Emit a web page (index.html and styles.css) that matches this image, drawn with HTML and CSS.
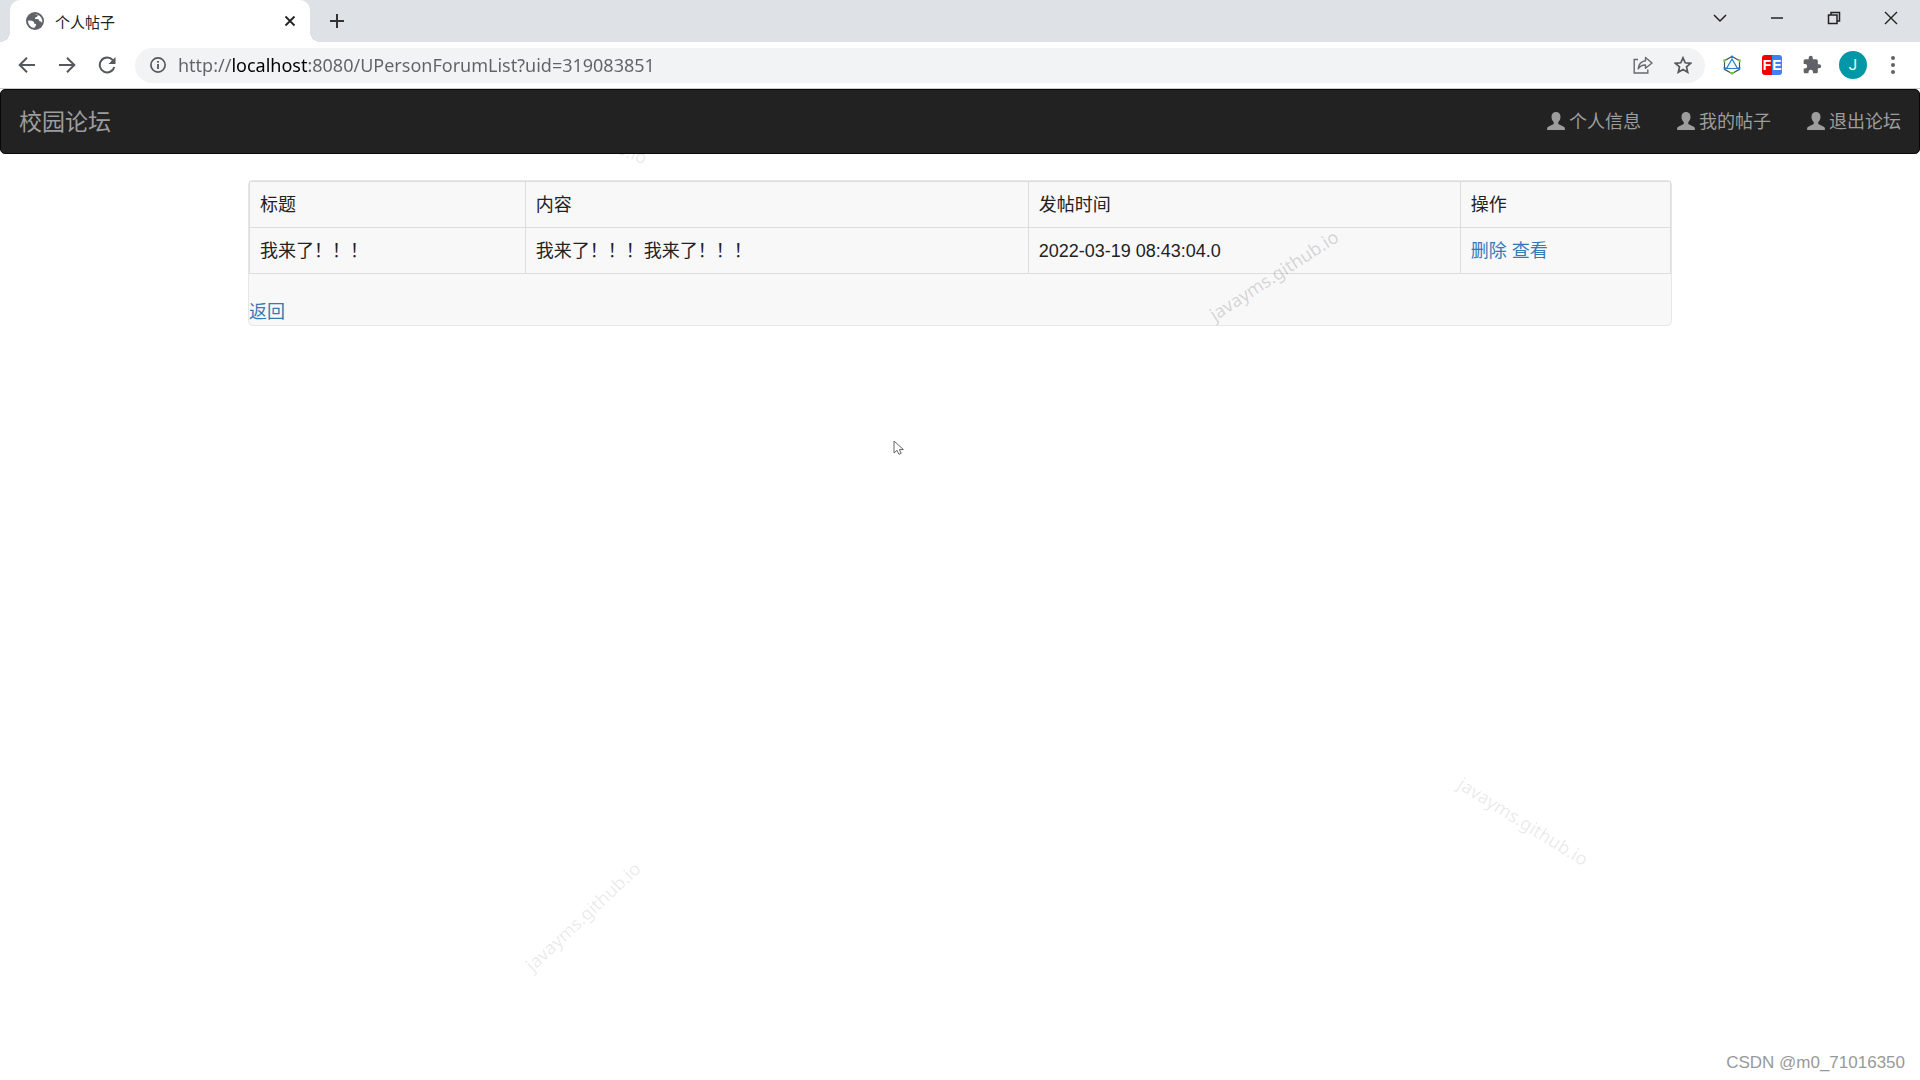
FILE: index.html
```html
<!DOCTYPE html>
<html lang="zh-CN">
<head>
    <meta charset="UTF-8">
    <meta name="viewport" content="width=device-width, initial-scale=1.0">
    <title>个人帖子</title>
    <link rel="stylesheet" href="styles.css">
</head>
<body>
    <!-- 浏览器标签栏 -->
    <div class="tab-strip">
        <div class="tab">
            <svg class="globe" width="18" height="18" viewBox="0 0 18 18">
                <circle cx="9" cy="9" r="9" fill="#5f6368"/>
                <path d="M2 8.5l4 .3 2 1.2.3 1.7 1.900.4-.4 1.700-1.600 2.300A7.200 7.200 0 0 1 2 8.500zM8.200 2.300l3-.1.6 1.400-1 1.500-1.600.5-.3 1.300 1.800.2 2 .4.8 1.800 2.100.4.4 1.500a7 7 0 0 0-4.500-8.500z" fill="#fff"/>
            </svg>
            <span class="tab-title">个人帖子</span>
            <button class="icon-btn tab-close" aria-label="关闭">
                <svg width="12" height="12" viewBox="0 0 12 12"><path d="M1.500 1.500l9 9M10.500 1.500l-9 9" stroke="#222" stroke-width="1.800"/></svg>
            </button>
        </div>
        <button class="icon-btn new-tab" aria-label="新标签页">
            <svg width="16" height="16" viewBox="0 0 16 16"><path d="M8 1v14M1 8h14" stroke="#333" stroke-width="2"/></svg>
        </button>
        <div class="window-buttons">
            <button class="icon-btn" aria-label="搜索标签页">
                <svg width="14" height="14" viewBox="0 0 14 14"><path d="M1 4l6 6 6-6" fill="none" stroke="#222" stroke-width="1.500"/></svg>
            </button>
            <button class="icon-btn" aria-label="最小化">
                <svg width="14" height="14" viewBox="0 0 14 14"><path d="M1 7h12" stroke="#222" stroke-width="1.500"/></svg>
            </button>
            <button class="icon-btn" aria-label="还原">
                <svg width="14" height="14" viewBox="0 0 14 14"><path d="M1.500 4h8.500v8.500H1.500zM4 4V1.500h8.500V10H10" fill="none" stroke="#222" stroke-width="1.500"/></svg>
            </button>
            <button class="icon-btn" aria-label="关闭窗口">
                <svg width="14" height="14" viewBox="0 0 14 14"><path d="M1 1l12 12M13 1L1 13" stroke="#222" stroke-width="1.400"/></svg>
            </button>
        </div>
    </div>

    <!-- 地址栏 -->
    <div class="toolbar">
        <div class="nav-buttons">
            <button class="icon-btn" aria-label="后退">
                <svg width="18" height="18" viewBox="0 0 18 18"><path d="M17 9H2M9 1.700L1.700 9 9 16.300" fill="none" stroke="#55585c" stroke-width="2"/></svg>
            </button>
            <button class="icon-btn" aria-label="前进">
                <svg width="18" height="18" viewBox="0 0 18 18"><path d="M1 9h15M9 1.700L16.300 9 9 16.300" fill="none" stroke="#55585c" stroke-width="2"/></svg>
            </button>
            <button class="icon-btn" aria-label="刷新">
                <svg width="18" height="18" viewBox="0 0 18 18"><path d="M14.800 4.200A7.400 7.400 0 1 0 16.300 11" fill="none" stroke="#55585c" stroke-width="2"/><path d="M17.500 1v7h-7z" fill="#55585c"/></svg>
            </button>
        </div>
        <div class="address-bar">
            <svg width="16" height="16" viewBox="0 0 16 16"><circle cx="8" cy="8" r="7.100" fill="none" stroke="#55585c" stroke-width="1.700"/><path d="M8 7v5M8 4v1.800" stroke="#55585c" stroke-width="1.800"/></svg>
            <input class="url" type="text" aria-label="地址" value="http://localhost:8080/UPersonForumList?uid=319083851">
            <button class="icon-btn" aria-label="分享">
                <svg width="20" height="18" viewBox="0 0 20 18"><path d="M5 3.500H1.200V17h13.600v-3.500" fill="none" stroke="#66696d" stroke-width="1.400"/><path d="M12.500 1.500L19 7l-6.500 5.200V9C9 9 7 10 5.200 12.800 5.600 8.500 8 5.300 12.500 4.700z" fill="none" stroke="#66696d" stroke-width="1.400" stroke-linejoin="round"/></svg>
            </button>
            <button class="icon-btn" aria-label="收藏">
                <svg width="18" height="18" viewBox="0 0 18 18"><path d="M9 1.800l2.200 5 5.400.5-4.100 3.600 1.200 5.300L9 13.400l-4.700 2.800 1.200-5.300L1.400 7.300l5.400-.5z" fill="none" stroke="#55585c" stroke-width="1.700"/></svg>
            </button>
        </div>
        <div class="extensions">
            <button class="icon-btn" aria-label="扩展程序一">
                <svg width="20" height="20" viewBox="0 0 20 20">
                    <path d="M10 1.500L17.500 5.700v8.600L10 18.500l-7.500-4.200V5.700z" fill="none" stroke="#46545e" stroke-width="1.200"/>
                    <path d="M10 4L4.500 13.500h11z" fill="#f2f7fc" stroke="#2b7fc3" stroke-width="1.200"/>
                    <path d="M10 0l2 3H8zM1 12.500h4l-2 3zM15 12.500h4l-2 3z" fill="#1684d8"/>
                    <path d="M1 4.500h4l-3 3.500zM19 4.500h-4l3 3.500zM7.500 17h5L10 20z" fill="#73c63a"/>
                </svg>
            </button>
            <button class="icon-btn fe-icon" aria-label="FE"><span class="fe-half fe-red">F</span><span class="fe-half fe-blue">E</span></button>
            <button class="icon-btn" aria-label="扩展程序">
                <svg width="20" height="20" viewBox="0 0 24 24"><path d="M20.500 11H19V7c0-1.100-.9-2-2-2h-4V3.500a2.500 2.500 0 0 0-5 0V5H4c-1.100 0-2 .9-2 2v3.800h1.500a2.700 2.700 0 0 1 0 5.400H2V20c0 1.100.9 2 2 2h3.800v-1.500a2.700 2.700 0 0 1 5.400 0V22H17c1.100 0 2-.9 2-2v-4h1.500a2.500 2.500 0 0 0 0-5z" fill="#5f6368"/></svg>
            </button>
            <button class="icon-btn avatar" aria-label="账户">J</button>
            <button class="icon-btn" aria-label="更多">
                <svg width="4" height="18" viewBox="0 0 4 18"><circle cx="2" cy="2" r="2"/><circle cx="2" cy="9" r="2"/><circle cx="2" cy="16" r="2"/></svg>
            </button>
        </div>
    </div>

    <!-- 导航栏 -->
    <nav class="navbar">
        <a class="navbar-brand" href="#">校园论坛</a>
        <ul class="navbar-nav">
            <li><a href="#"><svg class="user-icon" width="18" height="18" viewBox="0 0 18 18"><path d="M9 0c2.700 0 4.500 1.900 4.500 4.700 0 2.500-1 4.200-2.200 5.300v2l5.500 2.700c.7.400 1.100.9 1.100 1.700V18H.1v-1.600c0-.8.4-1.300 1.100-1.700L6.700 12v-2C5.500 8.900 4.500 7.200 4.500 4.700 4.500 1.900 6.300 0 9 0z"/></svg>个人信息</a></li>
            <li><a href="#"><svg class="user-icon" width="18" height="18" viewBox="0 0 18 18"><path d="M9 0c2.700 0 4.500 1.900 4.500 4.700 0 2.500-1 4.200-2.200 5.300v2l5.500 2.700c.7.400 1.100.9 1.100 1.700V18H.1v-1.600c0-.8.4-1.300 1.100-1.700L6.700 12v-2C5.500 8.900 4.500 7.200 4.500 4.700 4.500 1.900 6.300 0 9 0z"/></svg>我的帖子</a></li>
            <li><a href="#"><svg class="user-icon" width="18" height="18" viewBox="0 0 18 18"><path d="M9 0c2.700 0 4.500 1.900 4.500 4.700 0 2.500-1 4.200-2.200 5.300v2l5.500 2.700c.7.400 1.100.9 1.100 1.700V18H.1v-1.600c0-.8.4-1.300 1.100-1.700L6.700 12v-2C5.500 8.900 4.500 7.200 4.500 4.700 4.500 1.900 6.300 0 9 0z"/></svg>退出论坛</a></li>
        </ul>
    </nav>

    <main class="container">
        <div class="panel">
            <table class="table">
                <colgroup>
                    <col class="col-title">
                    <col class="col-content">
                    <col class="col-time">
                    <col class="col-action">
                </colgroup>
                <tr>
                    <td>标题</td>
                    <td>内容</td>
                    <td>发帖时间</td>
                    <td>操作</td>
                </tr>
                <tr>
                    <td>我来了！！！</td>
                    <td>我来了！！！我来了！！！</td>
                    <td>2022-03-19 08:43:04.0</td>
                    <td><a href="#">删除</a> <a href="#">查看</a></td>
                </tr>
            </table>
            <a href="#">返回</a>
        </div>
    </main>

    <!-- 水印 -->
    <div class="watermark mark-nav">javayms.github.io</div>
    <div class="watermark mark-table">javayms.github.io</div>
    <div class="watermark mark-left">javayms.github.io</div>
    <div class="watermark mark-right">javayms.github.io</div>
    <div class="csdn">CSDN @m0_71016350</div>
    <svg class="cursor" width="12" height="16" viewBox="0 0 12 16"><path d="M1 1v12l3-2.700 2 4 2.200-1-1.800-3.800h4z" fill="#fff" stroke="#666" stroke-width="1"/></svg>
</body>
</html>
```
FILE: styles.css
```css
* {
    box-sizing: border-box;
}
body {
    margin: 0;
    min-height: 100vh;
    position: relative;
    overflow: hidden;
    background-color: #fff;
    color: #222;
    font-family: "Liberation Sans", "Noto Sans CJK SC", sans-serif;
    font-size: 18px;
    line-height: 25px;
}
a {
    color: #337ab7;
    text-decoration: none;
}
a:hover {
    text-decoration: underline;
}
.icon-btn {
    display: flex;
    align-items: center;
    justify-content: center;
    flex: none;
    padding: 0;
    border: none;
    background: none;
    cursor: pointer;
}

/* 标签栏 */
.tab-strip {
    display: flex;
    align-items: center;
    height: 42px;
    padding-left: 10px;
    background-color: #dee1e6;
}
.tab {
    position: relative;
    display: flex;
    align-items: center;
    width: 300px;
    height: 42px;
    padding: 0 14px 0 16px;
    background-color: #fff;
    border-radius: 10px 10px 0 0;
}
.tab::before,
.tab::after {
    content: '';
    position: absolute;
    bottom: 0;
    width: 10px;
    height: 10px;
}
.tab::before {
    left: -10px;
    background: radial-gradient(circle at 0 0, transparent 10px, #fff 10px);
}
.tab::after {
    right: -10px;
    background: radial-gradient(circle at 100% 0, transparent 10px, #fff 10px);
}
.tab-title {
    flex: 1;
    margin-left: 11px;
    font-family: "Noto Sans CJK SC", sans-serif;
    font-size: 15px;
}
.new-tab {
    margin-left: 19px;
}
.window-buttons {
    display: flex;
    align-self: flex-start;
    margin-left: auto;
    padding-right: 1px;
}
.window-buttons .icon-btn {
    width: 57px;
    height: 36px;
}

/* 工具栏 */
.toolbar {
    display: flex;
    align-items: center;
    height: 47px;
    padding: 0 25px 0 18px;
    border-bottom: 1px solid #c8cacd;
}
.nav-buttons {
    display: flex;
    gap: 22px;
}
.address-bar {
    display: flex;
    align-items: center;
    flex: 1;
    gap: 21px;
    height: 35px;
    margin-left: 19px;
    padding: 0 13px 0 15px;
    background-color: #f1f3f4;
    border-radius: 18px;
}
.url {
    flex: 1;
    min-width: 0;
    margin-left: -9px;
    padding: 0;
    border: none;
    outline: none;
    font-family: "Noto Sans", sans-serif;
    font-size: 18px;
    line-height: 25px;
    /* 主机名用黑色，其余为灰色 */
    color: transparent;
    caret-color: #000;
    background: linear-gradient(to right, #5f6368 53px, #000 53px, #000 131px, #5f6368 131px);
    -webkit-background-clip: text;
    background-clip: text;
}
.extensions {
    display: flex;
    align-items: center;
    gap: 20px;
    margin-left: 17px;
}
.extensions svg {
    fill: #5f6368;
}
.fe-icon {
    border-radius: 3px;
    overflow: hidden;
}
.fe-half {
    width: 10px;
    height: 20px;
    color: #fff;
    font-family: "Liberation Sans", sans-serif;
    font-size: 14px;
    font-weight: bold;
    line-height: 20px;
}
.fe-red {
    background-color: #f20000;
}
.fe-blue {
    background-color: #3a83f1;
}
.avatar {
    width: 28px;
    height: 28px;
    margin: 0 4px 0 -3px;
    border-radius: 50%;
    background-color: #0097a7;
    color: #fff;
    font-family: Roboto, sans-serif;
    font-size: 15px;
}

/* 导航栏 */
.navbar {
    display: flex;
    align-items: center;
    justify-content: space-between;
    min-height: 65px;
    margin-bottom: 26px;
    border: 1px solid #080808;
    border-radius: 5px;
    background-color: #222;
}
.navbar a {
    display: flex;
    align-items: center;
    gap: 4px;
    padding: 20px 18px 18px;
    color: #9d9d9d;
}
.navbar .navbar-brand {
    font-size: 23px;
}
.navbar-nav {
    display: flex;
    margin: 0;
    padding: 0;
    list-style: none;
}
.user-icon {
    flex: none;
    margin-bottom: 3px;
    fill: #9d9d9d;
}

/* 帖子列表 */
.container {
    width: 100%;
    max-width: 1462px;
    margin: 0 auto;
    padding: 0 19px;
}
.panel {
    border: 1px solid #e7e7e7;
    border-radius: 5px;
    background-color: #f8f8f8;
}
.table {
    width: 100%;
    margin-bottom: 26px;
    border-collapse: collapse;
}
.table td {
    padding: 11px 10px 9px;
    border: 1px solid #ddd;
}
.col-title {
    width: 19.4%;
}
.col-content {
    width: 35.4%;
}
.col-time {
    width: 30.4%;
}
.col-action {
    width: 14.8%;
}

/* 浮层 */
.watermark {
    position: absolute;
    width: 160px;
    color: rgba(34, 34, 34, 0.1);
    font-family: "Noto Sans", sans-serif;
    text-align: center;
    pointer-events: none;
}
.mark-nav {
    left: 497px;
    top: 118px;
    transform: rotate(22deg);
}
.mark-table {
    left: 1194px;
    top: 263px;
    color: rgba(34, 34, 34, 0.18);
    transform: rotate(-33deg);
}
.mark-left {
    left: 503px;
    top: 904px;
    transform: rotate(-43deg);
}
.mark-right {
    left: 1443px;
    top: 809px;
    transform: rotate(32deg);
}
.csdn {
    position: absolute;
    right: 15px;
    bottom: 5px;
    color: #999;
    font-size: 17px;
}
.cursor {
    position: absolute;
    left: 893px;
    top: 440px;
}
```
